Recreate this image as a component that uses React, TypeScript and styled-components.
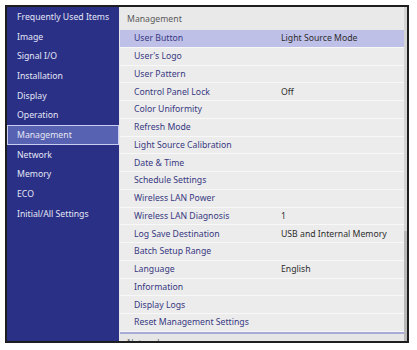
import * as React from "react";
import styled, { createGlobalStyle } from "styled-components";

const GlobalStyle = createGlobalStyle`
  html, body {
    margin: 0;
    padding: 0;
    background: #ffffff;
  }
  body {
    font-family: "Noto Sans", "Open Sans", sans-serif;
  }
`;

const sideItems = [
  "Frequently Used Items",
  "Image",
  "Signal I/O",
  "Installation",
  "Display",
  "Operation",
  "Management",
  "Network",
  "Memory",
  "ECO",
  "Initial/All Settings",
];

const rows: { label: string; value?: string }[] = [
  { label: "User Button", value: "Light Source Mode" },
  { label: "User's Logo" },
  { label: "User Pattern" },
  { label: "Control Panel Lock", value: "Off" },
  { label: "Color Uniformity" },
  { label: "Refresh Mode" },
  { label: "Light Source Calibration" },
  { label: "Date & Time" },
  { label: "Schedule Settings" },
  { label: "Wireless LAN Power" },
  { label: "Wireless LAN Diagnosis", value: "1" },
  { label: "Log Save Destination", value: "USB and Internal Memory" },
  { label: "Batch Setup Range" },
  { label: "Language", value: "English" },
  { label: "Information" },
  { label: "Display Logs" },
  { label: "Reset Management Settings" },
];

export default function App() {
  return (
    <>
      <GlobalStyle />
      <Frame>
        <Sidebar>
          {sideItems.map((item) => (
            <SideItem key={item} $active={item === "Management"}>
              {item}
            </SideItem>
          ))}
        </Sidebar>
        <Main>
          <Content>
            <SectionHeader>Management</SectionHeader>
            {rows.map((row, i) => (
              <Row key={row.label} $selected={i === 0}>
                <Label>{row.label}</Label>
                <Value>{row.value}</Value>
              </Row>
            ))}
            <Divider />
            <NextHeader>Network</NextHeader>
          </Content>
          <Scrollbar>
            <Thumb />
          </Scrollbar>
        </Main>
      </Frame>
    </>
  );
}

const Frame = styled.div`
  margin: 5px 0 0 5px;
  width: 404px;
  height: 338px;
  box-sizing: border-box;
  border: 2px solid #1e1e1e;
  display: flex;
  overflow: hidden;
`;

const Sidebar = styled.div`
  width: 112px;
  flex-shrink: 0;
  background: #2a3086;
  display: flex;
  flex-direction: column;
`;

const SideItem = styled.div<{ $active?: boolean }>`
  height: 19.7px;
  box-sizing: border-box;
  display: flex;
  align-items: center;
  padding-left: 9px;
  font-size: 8.7px;
  color: #e4e6f6;
  white-space: nowrap;
  border: 1px solid ${({ $active }) => ($active ? "#c9cdf0" : "transparent")};
  background: ${({ $active }) => ($active ? "#5862b2" : "transparent")};
`;

const Main = styled.div`
  flex: 1;
  display: flex;
  background: #e6e6e6;
  min-width: 0;
`;

const Content = styled.div`
  flex: 1;
  display: flex;
  flex-direction: column;
  padding-left: 1px;
  min-width: 0;
`;

const SectionHeader = styled.div`
  height: 23px;
  flex-shrink: 0;
  display: flex;
  align-items: center;
  padding-left: 7px;
  font-size: 8.7px;
  color: #5a5a5a;
  background: #e9e9e9;
`;

const Row = styled.div<{ $selected?: boolean }>`
  height: 17.75px;
  flex-shrink: 0;
  box-sizing: border-box;
  display: flex;
  align-items: center;
  padding-left: 14px;
  font-size: 8.7px;
  background: ${({ $selected }) => ($selected ? "#bfc0e8" : "#ececec")};
  border-bottom: 1px solid #f8f8f8;
`;

const Label = styled.span`
  width: 147px;
  flex-shrink: 0;
  color: #383981;
  white-space: nowrap;
`;

const Value = styled.span`
  color: #2e2e2e;
  white-space: nowrap;
`;

const Divider = styled.div`
  height: 2px;
  flex-shrink: 0;
  background: #a9aad6;
`;

const NextHeader = styled.div`
  padding: 3px 0 0 7px;
  font-size: 8.7px;
  color: #6a6a6a;
`;

const Scrollbar = styled.div`
  width: 3px;
  flex-shrink: 0;
  background: #d4d4d4;
  display: flex;
  flex-direction: column;
  justify-content: flex-end;
`;

const Thumb = styled.div`
  height: 110px;
  background: #b8b8b8;
`;
